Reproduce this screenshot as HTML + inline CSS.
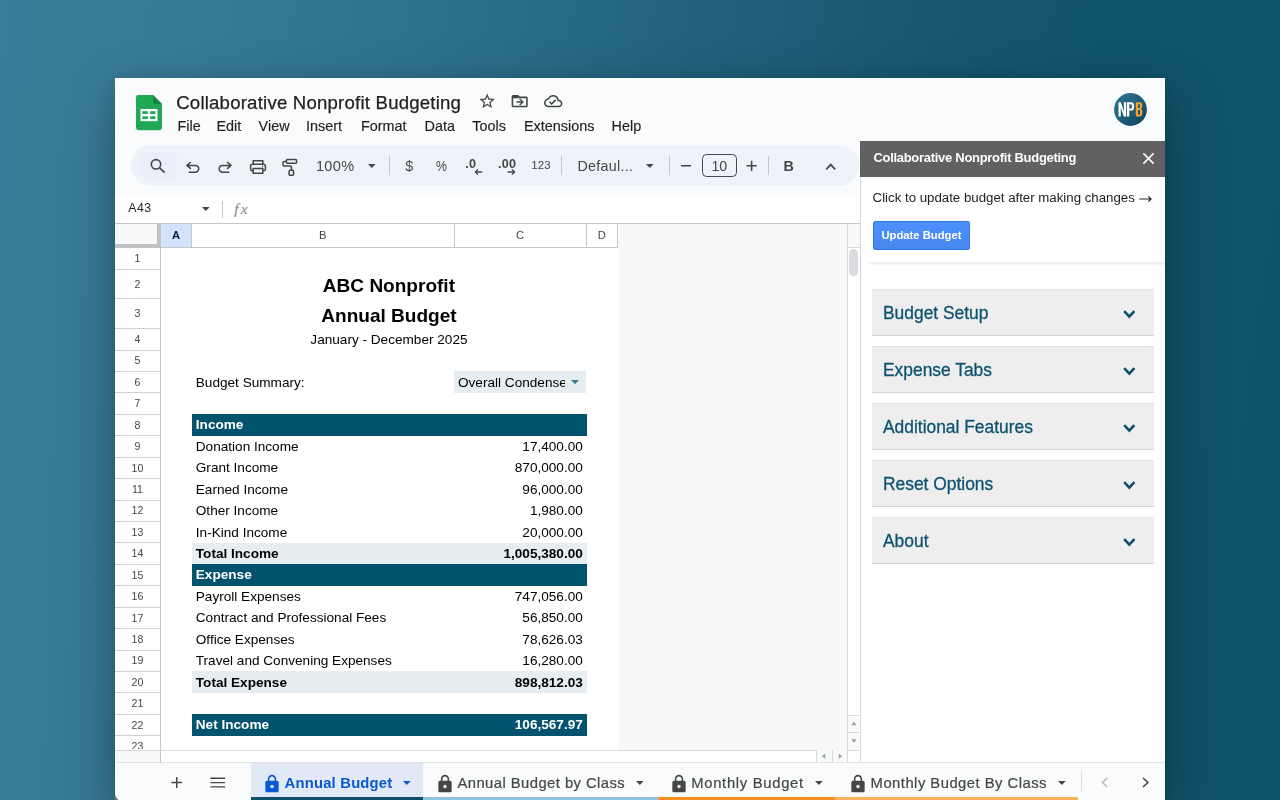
<!DOCTYPE html>
<html lang="en"><head><meta charset="utf-8"><title>Collaborative Nonprofit Budgeting - Google Sheets</title>
<style>
*{box-sizing:border-box;margin:0;padding:0}
html,body{width:1280px;height:800px;overflow:hidden}
body{position:relative;font-family:"Liberation Sans",sans-serif;color:#1f1f1f;
 background:linear-gradient(98deg,#3a7d9a 0%,#377a96 14%,#2f728d 30%,#22627d 50%,#16576f 68%,#11536b 80%,#10526a 100%);}
.a{position:absolute;white-space:nowrap}
.win{position:absolute;left:115px;top:78px;width:1050px;height:722.5px;background:#f9fbfd;
 box-shadow:0 24px 60px 0 rgba(0,0,0,.30),0 2px 22px 0 rgba(0,0,0,.13);border-radius:0 0 0 8px}
svg{display:block;overflow:visible}
.title{font-size:18.6px;line-height:22px;color:#1f1f1f;letter-spacing:.21px;-webkit-text-stroke:.25px #1f1f1f}
.menu{font-size:14.4px;line-height:18px;color:#1f1f1f;-webkit-text-stroke:.15px #1f1f1f}
.pill{background:#eff3f9;border-radius:20.2px}
.tb{color:#444746;line-height:18px}
.ch{background:#fff;border-right:1px solid #c7c7c7;border-bottom:1px solid #c7c7c7;font-size:11.2px;line-height:22.6px;text-align:center;color:#444746}
.ch.sel{background:#d3e3fd;color:#041e49;font-weight:bold}
.rh{font-size:10.6px;text-align:center;color:#444746;overflow:hidden;margin-top:-.7px}
.ct{font-size:13.6px;color:#000}
.ct.b{font-weight:bold}
.ct.w{color:#fff}
.ct.big{font-size:19.05px;font-weight:bold}
.acc{background:#eeeeee;border-top:1px solid #e4e4e4;border-bottom:1px solid #d6d6d6;color:#0e5170;font-size:18.4px;line-height:45.6px;padding-left:10.8px}
.acc span{display:inline-block;transform-origin:0 50%;-webkit-text-stroke:.3px #0e5170}
.tab{top:773.7px;font-size:14.8px;line-height:18px;color:#444746;-webkit-text-stroke:.2px #444746}
.root{position:absolute;left:0;top:0;width:1280px;height:800px;overflow:hidden;will-change:transform}

</style></head>
<body>
<div class="root">
<div class="a" style="left:115px;top:790px;width:12px;height:10px;background:#8d9193"></div>
<div class="win"></div>
<svg class="a" style="left:135.7px;top:94.9px" width="26" height="35.2" viewBox="0 0 26 35.2">
<path d="M2.4 0H17L26 9V32.8a2.4 2.4 0 0 1-2.4 2.4H2.4A2.4 2.4 0 0 1 0 32.8V2.4A2.4 2.4 0 0 1 2.4 0z" fill="#1fa855"/>
<path d="M17 0l9 9h-6.8A2.2 2.2 0 0 1 17 6.8z" fill="#13873f"/>
<rect x="4.5" y="14" width="17" height="12.2" fill="#fff"/>
<rect x="6.4" y="16.2" width="5.4" height="2.8" fill="#1fa855"/><rect x="14.2" y="16.2" width="5.2" height="2.8" fill="#1fa855"/>
<rect x="6.4" y="21.3" width="5.4" height="2.8" fill="#1fa855"/><rect x="14.2" y="21.3" width="5.2" height="2.8" fill="#1fa855"/>
</svg>
<div class="a title" style="left:176.2px;top:91.5px">Collaborative Nonprofit Budgeting</div>
<svg class="a" style="left:478.4px;top:92.2px" width="18.4" height="18.4" viewBox="0 0 24 24" fill="#444746"><path d="M22 9.24l-7.19-.62L12 2 9.19 8.63 2 9.24l5.46 4.73L5.82 21 12 17.27 18.18 21l-1.63-7.03L22 9.24zM12 15.4l-3.76 2.27 1-4.28-3.32-2.88 4.38-.38L12 6.1l1.71 4.04 4.38.38-3.32 2.88 1 4.28L12 15.4z"/></svg>
<svg class="a" style="left:510.4px;top:92.2px" width="19.4" height="18.4" viewBox="0 0 24 24" fill="#444746" preserveAspectRatio="none"><path d="M20 6h-8l-2-2H4c-1.1 0-2 .9-2 2v12c0 1.1.9 2 2 2h16c1.1 0 2-.9 2-2V8c0-1.1-.9-2-2-2zm0 12H4V8h16v10zm-8.6-1.6l1.2 1.2 4.6-4.6-4.6-4.6-1.2 1.2 2.5 2.5H8v1.8h5.9l-2.5 2.5z"/></svg>
<svg class="a" style="left:543.8px;top:92.2px" width="18.4" height="18.4" viewBox="0 0 24 24" fill="#444746"><path d="M19.35 10.04C18.67 6.59 15.64 4 12 4 9.11 4 6.6 5.64 5.35 8.04 2.34 8.36 0 10.91 0 14c0 3.31 2.69 6 6 6h13c2.76 0 5-2.24 5-5 0-2.64-2.05-4.78-4.65-4.960zM19 18H6c-2.21 0-4-1.79-4-4 0-2.05 1.53-3.76 3.56-3.97l1.07-.11.5-.95C8.080 7.14 9.940 6 12 6c2.62 0 4.88 1.86 5.39 4.43l.3 1.5 1.53.11c1.56.1 2.78 1.41 2.78 2.96 0 1.65-1.35 3-3 3zm-9-3.82l-2.090-2.090L6.500 13.500 10 17l6.010-6.010-1.410-1.410z"/></svg>
<div class="a menu" style="left:177.5px;top:116.5px">File</div>
<div class="a menu" style="left:216.5px;top:116.5px">Edit</div>
<div class="a menu" style="left:258.6px;top:116.5px">View</div>
<div class="a menu" style="left:306px;top:116.5px">Insert</div>
<div class="a menu" style="left:361px;top:116.5px">Format</div>
<div class="a menu" style="left:424.6px;top:116.5px">Data</div>
<div class="a menu" style="left:472.3px;top:116.5px">Tools</div>
<div class="a menu" style="left:524px;top:116.5px">Extensions</div>
<div class="a menu" style="left:611.6px;top:116.5px">Help</div>
<svg class="a" style="left:1113.7px;top:93.3px" width="33" height="33" viewBox="0 0 33 33">
<defs><linearGradient id="avg" x1="0.15" y1="0.1" x2="0.85" y2="0.9"><stop offset="0" stop-color="#2f7090"/><stop offset="1" stop-color="#0d4a63"/></linearGradient></defs>
<circle cx="16.5" cy="16.5" r="16.4" fill="url(#avg)"/>
<path fill="#fff" d="M4.500 23.600V9.200H6.900L9.900 18.400V9.200H12.200V23.600H9.800L6.800 14.400V23.600z"/>
<path fill="#fff" fill-rule="evenodd" d="M13 9.200H17.200C19.400 9.200 20.200 10.600 20.200 13.400C20.200 16.200 19.400 17.600 17.200 17.600H15.300V23.600H13zM15.300 11.300V15.500H16.800C17.700 15.500 17.900 14.800 17.900 13.400C17.900 12 17.700 11.300 16.800 11.300z"/>
<path fill="#f5a12d" fill-rule="evenodd" d="M21.800 9.200H25.600C27.600 9.200 28.200 10.500 28.200 12.700C28.200 14.400 27.800 15.500 26.800 16C28 16.500 28.400 17.700 28.400 19.600C28.400 22.200 27.600 23.600 25.500 23.600H21.800zM24.100 11.200V15.100H25.200C25.900 15.100 26 14.400 26 13.100C26 11.800 25.900 11.200 25.200 11.200zM24.100 17.100V21.600H25.300C26 21.600 26.100 20.800 26.100 19.300C26.100 17.900 26 17.100 25.300 17.100z"/></svg>
<div class="a pill" style="left:130.6px;top:145.3px;width:728.6px;height:40.4px"></div>
<div class="a" style="left:139px;top:152px;width:38px;height:27px;border-radius:14px 4px 4px 14px;background:#eaeef8"></div>
<svg class="a" style="left:0;top:0" width="1280" height="800" viewBox="0 0 1280 800" fill="none" stroke="#444746" stroke-width="1.55" stroke-linejoin="round">
<circle cx="156.0" cy="164.3" r="4.700" stroke-width="1.600"/><path d="M159.400 167.700L164.600 172.600" stroke-width="1.700"/>
<path d="M190.9 162.0L186.9 165.4L190.9 168.8M187.2 165.4H195.3a3.4 3.4 0 0 1 0 6.8H188.6"/>
<path d="M227.0 162.0L231.0 165.4L227.0 168.8M230.7 165.4H222.6a3.4 3.4 0 0 0 0 6.8H229.3"/>
<path d="M253.2 164.2V160.8H262.8V164.2M253.2 170.6H252a1.4 1.400 0 0 1-1.4-1.4V166a1.800 1.800 0 0 1 1.800-1.800H263.600a1.800 1.800 0 0 1 1.800 1.800V169.200a1.400 1.400 0 0 1-1.400 1.400H262.800M253.200 168.400H262.800V173.300H253.200z"/>
<circle cx="262.7" cy="166.5" r=".7" fill="#444746" stroke="none"/>
<rect x="286.4" y="159.5" width="10.2" height="3.8" rx="1"/>
<path d="M286.400 161.400H284.300a1.200 1.200 0 0 0-1.200 1.200V164.900a1.200 1.200 0 0 0 1.200 1.200H290.200a1.200 1.200 0 0 1 1.200 1.200V170.200"/>
<rect x="289.100" y="170.200" width="4.400" height="5.100" rx="1.100"/>
<path d="M482.2 172H475.400M478 169.400L475.300 172L478 174.600" stroke-width="1.300"/>
<path d="M507.600 172H514.500M511.900 169.400L514.600 172L511.900 174.600" stroke-width="1.300"/>
<path d="M681 165.700H691M746.500 165.800H756.700M751.600 160.700V170.900" stroke-linejoin="miter"/>
<path d="M826.200 169.400L830.700 164.600L835.200 169.400" stroke-width="1.700" stroke-linejoin="miter"/>
</svg>
<svg class="a" style="left:367.6px;top:164.3px" width="7.6" height="3.9" viewBox="0 0 10 5" preserveAspectRatio="none"><path d="M0 0h10L5 5z" fill="#444746"/></svg>
<svg class="a" style="left:646.2px;top:163.8px" width="7.6" height="3.9" viewBox="0 0 10 5" preserveAspectRatio="none"><path d="M0 0h10L5 5z" fill="#444746"/></svg>
<div class="a" style="left:388.6px;top:155.8px;width:1px;height:19.6px;background:#c7c7c7"></div>
<div class="a" style="left:561.1px;top:155.8px;width:1px;height:19.6px;background:#c7c7c7"></div>
<div class="a" style="left:669.3px;top:155.8px;width:1px;height:19.6px;background:#c7c7c7"></div>
<div class="a" style="left:768.3px;top:155.8px;width:1px;height:19.6px;background:#c7c7c7"></div>
<div class="a tb" style="left:315.9px;top:157.2px;font-size:14.5px;letter-spacing:.35px">100%</div>
<div class="a tb" style="left:405.2px;top:157.4px;font-size:14.3px">$</div>
<div class="a tb" style="left:436.0px;top:156.6px;font-size:14.6px;transform:scaleX(.84);transform-origin:0 0">%</div>
<div class="a tb" style="left:465.2px;top:154.5px;font-size:12.6px;font-weight:bold;letter-spacing:.2px">.0</div>
<div class="a tb" style="left:498.0px;top:154.5px;font-size:12.6px;font-weight:bold;letter-spacing:.2px">.00</div>
<div class="a tb" style="left:531.2px;top:156.2px;font-size:11.5px;letter-spacing:.15px">123</div>
<div class="a tb" style="left:577.4px;top:156.7px;font-size:14.3px;letter-spacing:.28px">Defaul...</div>
<div class="a" style="left:702.3px;top:153.6px;width:34.3px;height:23.9px;border:1px solid #444746;border-radius:4.5px"></div>
<div class="a tb" style="left:711.4px;top:156.6px;font-size:14.3px">10</div>
<div class="a tb" style="left:783.6px;top:157.1px;font-size:14.3px;font-weight:bold">B</div>
<div class="a" style="left:115px;top:194px;width:745px;height:29px;background:#fff"></div>
<div class="a" style="left:115px;top:222.7px;width:745px;height:1px;background:#c4c7c5"></div>
<div class="a" style="left:128.2px;top:200.8px;font-size:12.3px;line-height:15px;color:#1f1f1f;letter-spacing:.55px">A43</div>
<svg class="a" style="left:202.0px;top:206.5px" width="7.7" height="3.9" viewBox="0 0 10 5" preserveAspectRatio="none"><path d="M0 0h10L5 5z" fill="#444746"/></svg>
<div class="a" style="left:222.1px;top:200.5px;width:1px;height:17px;background:#c7c7c7"></div>
<div class="a" style="left:234.2px;top:199.5px;font-family:'Liberation Serif',serif;font-style:italic;font-size:15.6px;line-height:18px;color:#8a8f93;letter-spacing:2.2px;-webkit-text-stroke:.2px #8a8f93">fx</div>
<div class="a" style="left:115px;top:223.7px;width:745px;height:538.6px;background:#f8f9f7"></div>
<div class="a" style="left:115px;top:223.7px;width:503.4px;height:526.3px;background:#fff"></div>
<div class="a" style="left:115px;top:223.7px;width:45.9px;height:24.2px;background:#f8f9fa;border-right:4.6px solid #c3c3c3;border-bottom:4.4px solid #c3c3c3"></div>
<div class="a ch sel" style="left:160.9px;top:223.7px;width:31.2px;height:24.2px">A</div>
<div class="a ch" style="left:191.6px;top:223.7px;width:263.3px;height:24.2px">B</div>
<div class="a ch" style="left:454.4px;top:223.7px;width:132.4px;height:24.2px">C</div>
<div class="a ch" style="left:586.3px;top:223.7px;width:32.0px;height:24.2px">D</div>
<div class="a" style="left:191.2px;top:224.4px;width:1px;height:23.3px;background:#c7c7c7"></div>
<div class="a" style="left:454.0px;top:224.4px;width:1px;height:23.3px;background:#c7c7c7"></div>
<div class="a" style="left:585.9px;top:224.4px;width:1px;height:23.3px;background:#c7c7c7"></div>
<div class="a" style="left:617.4px;top:224.4px;width:1px;height:23.3px;background:#c7c7c7"></div>
<div class="a" style="left:115px;top:247.9px;width:45.9px;height:502.1px;background:#fff;border-right:1px solid #c7c7c7"></div>
<div class="a rh" style="left:115px;top:247.9px;width:45px;height:21.4px;line-height:22.0px">1</div>
<div class="a" style="left:115px;top:268.7px;width:45.4px;height:1px;background:#d0d0d0"></div>
<div class="a rh" style="left:115px;top:269.3px;width:45px;height:29.7px;line-height:30.3px">2</div>
<div class="a" style="left:115px;top:298.4px;width:45.4px;height:1px;background:#d0d0d0"></div>
<div class="a rh" style="left:115px;top:299.0px;width:45px;height:29.7px;line-height:30.3px">3</div>
<div class="a" style="left:115px;top:328.1px;width:45.4px;height:1px;background:#d0d0d0"></div>
<div class="a rh" style="left:115px;top:328.7px;width:45px;height:21.4px;line-height:22.0px">4</div>
<div class="a" style="left:115px;top:349.5px;width:45.4px;height:1px;background:#d0d0d0"></div>
<div class="a rh" style="left:115px;top:350.1px;width:45px;height:21.4px;line-height:22.0px">5</div>
<div class="a" style="left:115px;top:370.9px;width:45.4px;height:1px;background:#d0d0d0"></div>
<div class="a rh" style="left:115px;top:371.5px;width:45px;height:21.4px;line-height:22.0px">6</div>
<div class="a" style="left:115px;top:392.4px;width:45.4px;height:1px;background:#d0d0d0"></div>
<div class="a rh" style="left:115px;top:393.0px;width:45px;height:21.4px;line-height:22.0px">7</div>
<div class="a" style="left:115px;top:413.8px;width:45.4px;height:1px;background:#d0d0d0"></div>
<div class="a rh" style="left:115px;top:414.4px;width:45px;height:21.4px;line-height:22.0px">8</div>
<div class="a" style="left:115px;top:435.2px;width:45.4px;height:1px;background:#d0d0d0"></div>
<div class="a rh" style="left:115px;top:435.8px;width:45px;height:21.4px;line-height:22.0px">9</div>
<div class="a" style="left:115px;top:456.7px;width:45.4px;height:1px;background:#d0d0d0"></div>
<div class="a rh" style="left:115px;top:457.3px;width:45px;height:21.4px;line-height:22.0px">10</div>
<div class="a" style="left:115px;top:478.1px;width:45.4px;height:1px;background:#d0d0d0"></div>
<div class="a rh" style="left:115px;top:478.7px;width:45px;height:21.4px;line-height:22.0px">11</div>
<div class="a" style="left:115px;top:499.5px;width:45.4px;height:1px;background:#d0d0d0"></div>
<div class="a rh" style="left:115px;top:500.1px;width:45px;height:21.4px;line-height:22.0px">12</div>
<div class="a" style="left:115px;top:520.9px;width:45.4px;height:1px;background:#d0d0d0"></div>
<div class="a rh" style="left:115px;top:521.5px;width:45px;height:21.4px;line-height:22.0px">13</div>
<div class="a" style="left:115px;top:542.4px;width:45.4px;height:1px;background:#d0d0d0"></div>
<div class="a rh" style="left:115px;top:543.0px;width:45px;height:21.4px;line-height:22.0px">14</div>
<div class="a" style="left:115px;top:563.8px;width:45.4px;height:1px;background:#d0d0d0"></div>
<div class="a rh" style="left:115px;top:564.4px;width:45px;height:21.4px;line-height:22.0px">15</div>
<div class="a" style="left:115px;top:585.2px;width:45.4px;height:1px;background:#d0d0d0"></div>
<div class="a rh" style="left:115px;top:585.8px;width:45px;height:21.4px;line-height:22.0px">16</div>
<div class="a" style="left:115px;top:606.7px;width:45.4px;height:1px;background:#d0d0d0"></div>
<div class="a rh" style="left:115px;top:607.3px;width:45px;height:21.4px;line-height:22.0px">17</div>
<div class="a" style="left:115px;top:628.1px;width:45.4px;height:1px;background:#d0d0d0"></div>
<div class="a rh" style="left:115px;top:628.7px;width:45px;height:21.4px;line-height:22.0px">18</div>
<div class="a" style="left:115px;top:649.5px;width:45.4px;height:1px;background:#d0d0d0"></div>
<div class="a rh" style="left:115px;top:650.1px;width:45px;height:21.4px;line-height:22.0px">19</div>
<div class="a" style="left:115px;top:670.9px;width:45.4px;height:1px;background:#d0d0d0"></div>
<div class="a rh" style="left:115px;top:671.5px;width:45px;height:21.4px;line-height:22.0px">20</div>
<div class="a" style="left:115px;top:692.4px;width:45.4px;height:1px;background:#d0d0d0"></div>
<div class="a rh" style="left:115px;top:693.0px;width:45px;height:21.4px;line-height:22.0px">21</div>
<div class="a" style="left:115px;top:713.8px;width:45.4px;height:1px;background:#d0d0d0"></div>
<div class="a rh" style="left:115px;top:714.4px;width:45px;height:21.4px;line-height:22.0px">22</div>
<div class="a" style="left:115px;top:735.2px;width:45.4px;height:1px;background:#d0d0d0"></div>
<div class="a rh" style="left:115px;top:735.8px;width:45px;height:14.2px;line-height:22.0px">23</div>
<div class="a" style="left:115px;top:749.5px;width:732.3px;height:12.3px;background:#fff;border-top:1px solid #d9d9d9"></div>
<div class="a" style="left:115px;top:750.5px;width:45.9px;height:11.3px;background:#f8f9fa;border-right:1px solid #c7c7c7"></div>
<div class="a ct big" style="left:191.6px;width:394.7px;text-align:center;top:270.9px;height:29.7px;line-height:29.7px">ABC Nonprofit</div>
<div class="a ct big" style="left:191.6px;width:394.7px;text-align:center;top:300.6px;height:29.7px;line-height:29.7px">Annual Budget</div>
<div class="a ct " style="left:191.6px;width:394.7px;text-align:center;top:329.3px;height:21.4px;line-height:21.4px">January - December 2025</div>
<div class="a ct " style="left:195.8px;top:371.5px;height:21.4px;line-height:22.0px">Budget Summary:</div>
<div class="a" style="left:454.2px;top:371.3px;width:132.3px;height:21.8px;background:#e7eef2"></div>
<div class="a ct" style="left:458.0px;top:371.5px;width:106.900px;overflow:hidden;height:21.4px;line-height:22.0px">Overall Condensed</div>
<svg class="a" style="left:571.2px;top:380.1px" width="8" height="4.2" viewBox="0 0 10 5" preserveAspectRatio="none"><path d="M0 0h10L5 5z" fill="#3f7d94"/></svg>
<div class="a" style="left:191.6px;top:414.2px;width:395.0px;height:21.8px;background:#03536f"></div>
<div class="a ct b w" style="left:195.8px;top:414.4px;height:21.4px;line-height:22.0px">Income</div>
<div class="a ct " style="left:195.8px;top:435.8px;height:21.4px;line-height:22.0px">Donation Income</div>
<div class="a ct " style="right:697.2px;top:435.8px;height:21.4px;line-height:22.0px;text-align:right">17,400.00</div>
<div class="a ct " style="left:195.8px;top:457.3px;height:21.4px;line-height:22.0px">Grant Income</div>
<div class="a ct " style="right:697.2px;top:457.3px;height:21.4px;line-height:22.0px;text-align:right">870,000.00</div>
<div class="a ct " style="left:195.8px;top:478.7px;height:21.4px;line-height:22.0px">Earned Income</div>
<div class="a ct " style="right:697.2px;top:478.7px;height:21.4px;line-height:22.0px;text-align:right">96,000.00</div>
<div class="a ct " style="left:195.8px;top:500.1px;height:21.4px;line-height:22.0px">Other Income</div>
<div class="a ct " style="right:697.2px;top:500.1px;height:21.4px;line-height:22.0px;text-align:right">1,980.00</div>
<div class="a ct " style="left:195.8px;top:521.5px;height:21.4px;line-height:22.0px">In-Kind Income</div>
<div class="a ct " style="right:697.2px;top:521.5px;height:21.4px;line-height:22.0px;text-align:right">20,000.00</div>
<div class="a" style="left:191.6px;top:542.8px;width:395.0px;height:21.8px;background:#e7eef2"></div>
<div class="a ct b" style="left:195.8px;top:543.0px;height:21.4px;line-height:22.0px">Total Income</div>
<div class="a ct b" style="right:697.2px;top:543.0px;height:21.4px;line-height:22.0px;text-align:right">1,005,380.00</div>
<div class="a" style="left:191.6px;top:564.2px;width:395.0px;height:21.8px;background:#03536f"></div>
<div class="a ct b w" style="left:195.8px;top:564.4px;height:21.4px;line-height:22.0px">Expense</div>
<div class="a ct " style="left:195.8px;top:585.8px;height:21.4px;line-height:22.0px">Payroll Expenses</div>
<div class="a ct " style="right:697.2px;top:585.8px;height:21.4px;line-height:22.0px;text-align:right">747,056.00</div>
<div class="a ct " style="left:195.8px;top:607.3px;height:21.4px;line-height:22.0px">Contract and Professional Fees</div>
<div class="a ct " style="right:697.2px;top:607.3px;height:21.4px;line-height:22.0px;text-align:right">56,850.00</div>
<div class="a ct " style="left:195.8px;top:628.7px;height:21.4px;line-height:22.0px">Office Expenses</div>
<div class="a ct " style="right:697.2px;top:628.7px;height:21.4px;line-height:22.0px;text-align:right">78,626.03</div>
<div class="a ct " style="left:195.8px;top:650.1px;height:21.4px;line-height:22.0px">Travel and Convening Expenses</div>
<div class="a ct " style="right:697.2px;top:650.1px;height:21.4px;line-height:22.0px;text-align:right">16,280.00</div>
<div class="a" style="left:191.6px;top:671.3px;width:395.0px;height:21.8px;background:#e7eef2"></div>
<div class="a ct b" style="left:195.8px;top:671.5px;height:21.4px;line-height:22.0px">Total Expense</div>
<div class="a ct b" style="right:697.2px;top:671.5px;height:21.4px;line-height:22.0px;text-align:right">898,812.03</div>
<div class="a" style="left:191.6px;top:714.2px;width:395.0px;height:21.8px;background:#03536f"></div>
<div class="a ct b w" style="left:195.8px;top:714.4px;height:21.4px;line-height:22.0px">Net Income</div>
<div class="a ct b w" style="right:697.2px;top:714.4px;height:21.4px;line-height:22.0px;text-align:right">106,567.97</div>
<div class="a" style="left:847.3px;top:223.7px;width:12.7px;height:538.6px;background:#fff;border-left:1px solid #d9d9d9"></div>
<div class="a" style="left:847.3px;top:223.7px;width:12.7px;height:24.2px;background:#f8f9fa;border-left:1px solid #d9d9d9;border-bottom:1px solid #d9d9d9"></div>
<div class="a" style="left:849.4px;top:249.2px;width:8.6px;height:26.6px;border-radius:4.3px;background:#dadce0"></div>
<div class="a" style="left:859.5px;top:140.5px;width:305.5px;height:621.8px;background:#fff;border-left:1px solid #d5d8dc"></div>
<div class="a" style="left:860px;top:140.5px;width:305px;height:36px;background:#616161"></div>
<div class="a" style="left:873.4px;top:149.6px;font-size:13px;line-height:16px;font-weight:bold;color:#fff;letter-spacing:-.29px">Collaborative Nonprofit Budgeting</div>
<svg class="a" style="left:1142.8px;top:153.2px" width="11" height="11" viewBox="0 0 11 11"><path d="M.4 .4L10.600 10.600M10.600 .4L.4 10.600" stroke="#fff" stroke-width="1.500" fill="none"/></svg>
<div class="a" style="left:872.6px;top:190.4px;font-size:13.26px;line-height:16px;color:#222">Click to update budget after making changes</div>
<svg class="a" style="left:1139px;top:194.500px" width="13" height="8" viewBox="0 0 13 8"><path d="M.3 4H12M9.300 1.300L12.100 4L9.300 6.700" stroke="#222" stroke-width="1.150" fill="none"/></svg>
<div class="a" style="left:872.5px;top:221.1px;width:97.8px;height:29px;border:1px solid #3079ed;border-radius:2px;background:linear-gradient(#4d90fe,#4787ed);color:#fff;font-weight:bold;font-size:11.25px;line-height:27px;text-align:center">Update Budget</div>
<div class="a" style="left:866px;top:260.800px;width:299px;height:5px;background:linear-gradient(rgba(0,0,0,0),rgba(0,0,0,.075) 50%,rgba(0,0,0,.02) 80%,rgba(0,0,0,0));-webkit-mask-image:linear-gradient(90deg,transparent,#000 8px)"></div>
<div class="a acc" style="left:872.3px;top:289.0px;width:281.8px;height:47px"><span style="transform:scaleX(0.946)">Budget Setup</span></div>
<svg class="a" style="left:1122px;top:309.0px" width="15" height="10" viewBox="0 0 15 10"><path d="M2.2 2.2L7.300 7.700L12.400 2.200" stroke="#0d4f6c" stroke-width="2.600" fill="none"/></svg>
<div class="a acc" style="left:872.3px;top:346.1px;width:281.8px;height:47px"><span style="transform:scaleX(0.946)">Expense Tabs</span></div>
<svg class="a" style="left:1122px;top:366.1px" width="15" height="10" viewBox="0 0 15 10"><path d="M2.2 2.2L7.300 7.700L12.400 2.200" stroke="#0d4f6c" stroke-width="2.600" fill="none"/></svg>
<div class="a acc" style="left:872.3px;top:403.1px;width:281.8px;height:47px"><span style="transform:scaleX(0.946)">Additional Features</span></div>
<svg class="a" style="left:1122px;top:423.1px" width="15" height="10" viewBox="0 0 15 10"><path d="M2.2 2.2L7.300 7.700L12.400 2.200" stroke="#0d4f6c" stroke-width="2.600" fill="none"/></svg>
<div class="a acc" style="left:872.3px;top:460.2px;width:281.8px;height:47px"><span style="transform:scaleX(0.946)">Reset Options</span></div>
<svg class="a" style="left:1122px;top:480.2px" width="15" height="10" viewBox="0 0 15 10"><path d="M2.2 2.2L7.300 7.700L12.400 2.200" stroke="#0d4f6c" stroke-width="2.600" fill="none"/></svg>
<div class="a acc" style="left:872.3px;top:517.2px;width:281.8px;height:47px"><span style="transform:scaleX(0.946)">About</span></div>
<svg class="a" style="left:1122px;top:537.2px" width="15" height="10" viewBox="0 0 15 10"><path d="M2.2 2.2L7.300 7.700L12.400 2.200" stroke="#0d4f6c" stroke-width="2.600" fill="none"/></svg>
<div class="a" style="left:115px;top:762.2px;width:1050px;height:38px;background:#f9fbfd;border-top:1px solid #e1e3e1;border-radius:0 0 0 8px"></div>
<svg class="a" style="left:0;top:0" width="1280" height="800" viewBox="0 0 1280 800" fill="none" stroke="#444746" stroke-width="1.5">
<path d="M171.400 782.500H182.100M176.750 777.100V787.900"/>
<path d="M210.400 778.300H225.100M210.400 782.600H225.100M210.400 786.900H225.100" stroke-width="1.400"/>
<path d="M1107.300 778L1102.400 782.500L1107.300 787" stroke="#b4b7b6" stroke-width="1.500"/>
<path d="M1143 778L1147.900 782.500L1143 787" stroke-width="1.600"/>
</svg>
<div class="a" style="left:250.800px;top:763.200px;width:172.300px;height:37px;background:#e1e9f7"></div>
<div class="a" style="left:250.8px;top:797.200px;width:172.3px;height:3px;background:#0d506a"></div>
<div class="a" style="left:423.1px;top:797.200px;width:234.6px;height:3px;background:#8cc5dc"></div>
<div class="a" style="left:657.7px;top:797.200px;width:177.5px;height:3px;background:#f6921e"></div>
<div class="a" style="left:835.2px;top:797.200px;width:243.0px;height:3px;background:#f9b15d"></div>
<svg class="a" style="left:261.6px;top:774.1px" width="20" height="20" viewBox="0 0 24 24" fill="#0b57d0"><path d="M18 8h-1V6c0-2.760-2.240-5-5-5S7 3.240 7 6v2H6c-1.100 0-2 .9-2 2v10c0 1.100.9 2 2 2h12c1.100 0 2-.9 2-2V10c0-1.100-.9-2-2-2zm-6 9c-1.100 0-2-.9-2-2s.9-2 2-2 2 .9 2 2-.9 2-2 2zm3.100-9H8.900V6c0-1.710 1.390-3.100 3.100-3.100 1.710 0 3.100 1.390 3.100 3.100v2z"/></svg>
<div class="a tab" style="left:284.600px;color:#0b57d0;font-weight:bold;letter-spacing:.2px;-webkit-text-stroke:0">Annual Budget</div>
<svg class="a" style="left:403.1px;top:780.8px" width="7.7" height="3.9" viewBox="0 0 10 5" preserveAspectRatio="none"><path d="M0 0h10L5 5z" fill="#0b57d0"/></svg>
<svg class="a" style="left:435.0px;top:774.1px" width="20" height="20" viewBox="0 0 24 24" fill="#444746"><path d="M18 8h-1V6c0-2.760-2.240-5-5-5S7 3.240 7 6v2H6c-1.100 0-2 .9-2 2v10c0 1.100.9 2 2 2h12c1.100 0 2-.9 2-2V10c0-1.100-.9-2-2-2zm-6 9c-1.100 0-2-.9-2-2s.9-2 2-2 2 .9 2 2-.9 2-2 2zm3.100-9H8.900V6c0-1.710 1.390-3.100 3.100-3.100 1.710 0 3.100 1.390 3.100 3.100v2z"/></svg>
<div class="a tab" style="left:457.400px;letter-spacing:.45px">Annual Budget by Class</div>
<svg class="a" style="left:636.4px;top:780.6px" width="7.7" height="3.9" viewBox="0 0 10 5" preserveAspectRatio="none"><path d="M0 0h10L5 5z" fill="#444746"/></svg>
<svg class="a" style="left:669.3px;top:774.1px" width="20" height="20" viewBox="0 0 24 24" fill="#444746"><path d="M18 8h-1V6c0-2.760-2.240-5-5-5S7 3.240 7 6v2H6c-1.100 0-2 .9-2 2v10c0 1.100.9 2 2 2h12c1.100 0 2-.9 2-2V10c0-1.100-.9-2-2-2zm-6 9c-1.100 0-2-.9-2-2s.9-2 2-2 2 .9 2 2-.9 2-2 2zm3.100-9H8.900V6c0-1.710 1.390-3.100 3.100-3.100 1.710 0 3.100 1.390 3.100 3.100v2z"/></svg>
<div class="a tab" style="left:691.200px;letter-spacing:.7px">Monthly Budget</div>
<svg class="a" style="left:815.0px;top:780.6px" width="7.7" height="3.9" viewBox="0 0 10 5" preserveAspectRatio="none"><path d="M0 0h10L5 5z" fill="#444746"/></svg>
<svg class="a" style="left:847.7px;top:774.1px" width="20" height="20" viewBox="0 0 24 24" fill="#444746"><path d="M18 8h-1V6c0-2.760-2.240-5-5-5S7 3.240 7 6v2H6c-1.100 0-2 .9-2 2v10c0 1.100.9 2 2 2h12c1.100 0 2-.9 2-2V10c0-1.100-.9-2-2-2zm-6 9c-1.100 0-2-.9-2-2s.9-2 2-2 2 .9 2 2-.9 2-2 2zm3.100-9H8.900V6c0-1.710 1.390-3.100 3.100-3.100 1.710 0 3.100 1.390 3.100 3.100v2z"/></svg>
<div class="a tab" style="left:870.600px;letter-spacing:.48px">Monthly Budget By Class</div>
<svg class="a" style="left:1057.9px;top:780.6px" width="7.7" height="3.9" viewBox="0 0 10 5" preserveAspectRatio="none"><path d="M0 0h10L5 5z" fill="#444746"/></svg>
<div class="a" style="left:1080.700px;top:771.300px;width:1px;height:20.200px;background:#dadce0"></div>
<div class="a" style="left:815.500px;top:750px;width:31.800px;height:12.200px;background:#f8f9fa;border-left:1px solid #d9d9d9"></div>
<div class="a" style="left:831.800px;top:750px;width:1px;height:12.200px;background:#d9d9d9"></div>
<div class="a" style="left:848.300px;top:714.500px;width:11.200px;height:35.500px;background:#f8f9fa;border-top:1px solid #d9d9d9"></div>
<div class="a" style="left:848.300px;top:732.200px;width:11.200px;height:1px;background:#d9d9d9"></div>
<div class="a" style="left:848.300px;top:749.600px;width:11.200px;height:1px;background:#d9d9d9"></div>
<svg class="a" style="left:0;top:0" width="1280" height="800" viewBox="0 0 1280 800" fill="#9aa0a6">
<path d="M821.700 756.300l3.600-2.500v5zM842.300 756.300l-3.600-2.500v5zM853.900 721.700l2.600 3.600h-5.200zM853.900 742.900l2.600-3.600h-5.200z"/>
</svg>
</div>
</body></html>
